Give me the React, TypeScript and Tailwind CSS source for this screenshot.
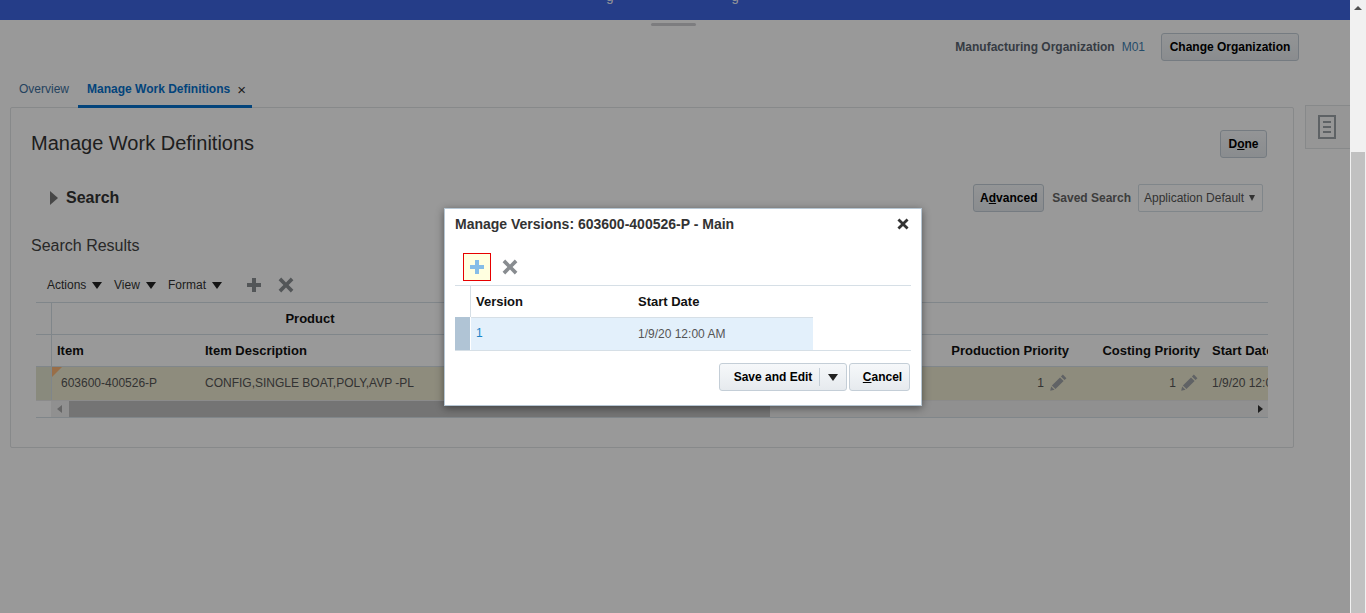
import React from "react";

const FONT = "font-['Liberation_Sans',Arial,sans-serif]";
const BTN =
  "h-7 flex items-center justify-center rounded-[3px] border border-[#c4ced7] bg-gradient-to-b from-[#f6f8fa] to-[#e6eaee] text-xs font-bold text-[#000]";

function Plus({ className }: { className: string }) {
  return (
    <svg viewBox="0 0 16 16" className={className} fill="currentColor">
      <path d="M6 1h4v5h5v4h-5v5H6v-5H1V6h5z" />
    </svg>
  );
}

function Cross({ className }: { className: string }) {
  return (
    <svg viewBox="0 0 16 16" className={className} fill="currentColor">
      <path d="M3.2.6 8 5.4 12.8.6l2.6 2.6L10.6 8l4.8 4.8-2.6 2.6L8 10.6l-4.8 4.8-2.6-2.6L5.4 8 .6 3.2z" />
    </svg>
  );
}

function Pencil() {
  return (
    <svg viewBox="0 0 18 18" className="w-[17px] h-[17px] text-[#a0a4a8]" fill="currentColor">
      <path d="M13.6.6 17.4 4.4 15.4 6.4 11.6 2.6zM10.6 3.6l3.8 3.8-8.6 8.6-3.8-3.8zM1.2 13.2l3.6 3.6-4.6 1z" />
    </svg>
  );
}

function Caret({ className = "ml-[5px]" }: { className?: string }) {
  return <span className={`${className} w-0 h-0 border-x-[5px] border-x-transparent border-t-[7px] border-t-[#222]`} />;
}

function ToolbarMenu({ label, width }: { label: string; width: string }) {
  return (
    <div className={`flex items-center ${width}`}>
      <span className="text-xs text-[#333]">{label}</span>
      <Caret className="ml-[6px]" />
    </div>
  );
}

function ResultsTable() {
  return (
    <div className="mt-1 mx-[25px] border-t border-[#d6dfe6] text-xs overflow-hidden">
      <div className="flex h-8 border-b border-[#d6dfe6]">
        <div className="w-[15px] shrink-0 border-r border-[#d6dfe6] box-content" />
        <div className="w-[516px] flex items-center justify-center font-bold text-[13px] text-[#111]">Product</div>
      </div>
      <div className="flex h-8 border-b border-[#d6dfe6] font-bold text-[13px] text-[#111] whitespace-nowrap">
        <div className="w-[15px] shrink-0 border-r border-[#d6dfe6] box-content" />
        <div className="w-[147px] shrink-0 pl-[5px] flex items-center">Item</div>
        <div className="w-[731px] shrink-0 pl-[6px] flex items-center">Item Description</div>
        <div className="w-[145px] shrink-0 pr-[6px] flex items-center justify-end">Production Priority</div>
        <div className="w-[131px] shrink-0 pr-[6px] flex items-center justify-end">Costing Priority</div>
        <div className="flex-1 pl-[6px] flex items-center overflow-hidden">Start Date</div>
      </div>
      <div className="flex h-[33px] pb-[2px] bg-[#ede9d0] text-[#555] whitespace-nowrap">
        <div className="w-[15px] -mb-[2px] shrink-0 border-r border-[#d6dfe6] box-content bg-[#e5e6d0]" />
        <div className="relative w-[147px] shrink-0 pl-[9px] flex items-center">
          <span className="absolute left-0 top-0 w-0 h-0 border-t-[10px] border-t-[#ffb878] border-r-[10px] border-r-transparent" />
          603600-400526-P
        </div>
        <div className="w-[731px] shrink-0 pl-[6px] flex items-center">CONFIG,SINGLE BOAT,POLY,AVP -PL</div>
        <div className="w-[145px] shrink-0 pr-[8px] flex items-center justify-end gap-[6px]">
          1 <Pencil />
        </div>
        <div className="w-[131px] shrink-0 pr-[8px] flex items-center justify-end gap-[5px]">
          1 <Pencil />
        </div>
        <div className="flex-1 pl-[6px] flex items-center overflow-hidden">1/9/20 12:00 AM</div>
      </div>
      <div className="flex h-[18px] border-b border-[#d6dfe6] border-t border-t-[#e8e8e8] bg-[#f0f0f0]">
        <div className="w-[15px] shrink-0 bg-white" />
        <div className="flex-1 flex items-center relative">
          <span className="ml-[6px] w-0 h-0 border-y-[4px] border-y-transparent border-r-[5px] border-r-[#aaa]" />
          <div className="ml-[7px] w-[701px] h-full bg-[#c1c1c1]" />
          <span className="absolute right-[5px] w-0 h-0 border-y-[4px] border-y-transparent border-l-[5px] border-l-[#333]" />
        </div>
      </div>
    </div>
  );
}

function VersionsDialog() {
  return (
    <div className="absolute z-30 left-[444px] top-[208px] w-[478px] h-[198px] bg-white border border-[#b6c6d3] shadow-[0_2px_8px_rgba(0,0,0,0.45)] px-[10px]">
      <div className="flex items-center justify-between h-[30px] pr-[2px]">
        <span className="text-sm font-bold text-[#333]">Manage Versions: 603600-400526-P - Main</span>
        <Cross className="w-3 h-3 text-[#333]" />
      </div>
      <div className="flex items-center h-[28px] mt-[14px] pl-2 gap-[11px]">
        <div className="w-7 h-7 border border-[#e60000] bg-[#ffffe0] flex items-center justify-center">
          <Plus className="w-4 h-4 text-[#85bde8]" />
        </div>
        <Cross className="w-4 h-4 text-[#888c90]" />
      </div>
      <div className="mt-1 border-t border-[#d6dfe6] border-b">
        <div className="flex h-[31px]">
          <div className="w-[15px] border-r border-[#d6dfe6] box-content" />
          <div className="w-[167px] pl-[5px] flex items-center text-[13px] font-bold text-[#111]">Version</div>
          <div className="flex items-center text-[13px] font-bold text-[#111]">Start Date</div>
        </div>
        <div className="flex h-[33px]">
          <div className="w-[15px] bg-[#b0c4d5] border-r border-white box-content" />
          <div className="w-[342px] flex bg-[#e3f0fb] border-t border-[#d6dfe6] text-xs">
            <div className="w-[167px] pl-[5px] pt-[7px] text-[#1a85c8]">1</div>
            <div className="pt-[8px] text-[#555]">1/9/20 12:00 AM</div>
          </div>
        </div>
      </div>
      <div className="flex justify-end mt-3 gap-[2px] pr-[1px]">
        <div className={`${BTN} w-[128px]`}>
          <span className="flex-1 text-center pl-[7px]">Save and Edit</span>
          <span className="w-[27px] h-[18px] border-l border-[#c4ced7] flex items-center justify-center">
            <Caret className="" />
          </span>
        </div>
        <div className={`${BTN} w-[61px] pl-[6px]`}>
          <span>
            <span className="underline">C</span>ancel
          </span>
        </div>
      </div>
    </div>
  );
}

export default function App() {
  return (
    <div className={`${FONT} flex h-screen overflow-hidden bg-white`}>
      <div className="relative w-[1350px] shrink-0 h-full flex flex-col">
        {/* Banner, its title is cut off by the scroll position */}
        <div className="h-5 shrink-0 bg-[#3f67e3] overflow-hidden flex justify-center gap-[118px] pr-[5px] text-white text-[13px] leading-none">
          <span className="-mt-[10px]">g</span>
          <span className="-mt-[10px]">g</span>
        </div>
        <div className="mt-[3px] ml-[651px] h-[3px] w-[45px] rounded-full bg-[#d0d0d4]" />

        <div className="mt-[7px] h-7 flex items-center justify-end pr-[51px] text-xs">
          <span className="font-bold text-[#5a6470]">Manufacturing Organization</span>
          <span className="ml-[7px] text-[#3f7fb0]">M01</span>
          <div className={`${BTN} ml-4 w-[138px]`}>Change Organization</div>
        </div>

        <div className="flex items-start">
          <div className="w-[1294px] shrink-0">
            <div className="flex h-[47px] items-end pl-[10px] relative -mb-px text-xs">
              <div className="h-9 px-[9px] pb-[2px] flex items-center text-[#3d6f9e]">Overview</div>
              <div className="h-9 flex items-center pl-[9px] pr-[6px] border-b-[3px] border-[#0572ce] font-bold text-[#0572ce]">
                Manage Work Definitions
                <span className="ml-[7px] mt-[2px] font-normal text-[15px] leading-none text-[#333]">×</span>
              </div>
            </div>

            <div className="ml-[10px] h-[341px] border border-[#e2e4e6] rounded-[2px]">
              <div className="mt-[22px] h-7 flex items-center justify-between pl-5 pr-[26px]">
                <h1 className="pb-[2px] text-xl text-[#333]">Manage Work Definitions</h1>
                <div className={`${BTN} w-[47px]`}>
                  <span>
                    D<span className="underline">o</span>ne
                  </span>
                </div>
              </div>

              <div className="mt-[26px] h-7 flex items-center pl-[39px] pr-[30px]">
                <span className="w-0 h-0 border-y-[7px] border-y-transparent border-l-[8px] border-l-[#777]" />
                <span className="ml-2 text-base font-bold text-[#333]">Search</span>
                <div className={`${BTN} ml-auto w-[71px]`}>
                  <span>
                    A<span className="underline">d</span>vanced
                  </span>
                </div>
                <span className="ml-[8px] text-xs font-bold text-[#666]">Saved Search</span>
                <div className="ml-[7px] w-[125px] h-7 border border-[#d6dfe6] rounded-[2px] flex items-center pl-[5px] text-xs text-[#555]">
                  Application Default
                  <span className="ml-[5px] w-0 h-0 border-x-[3.5px] border-x-transparent border-t-[6px] border-t-[#555]" />
                </div>
              </div>

              <h2 className="mt-[24px] ml-5 h-5 text-base leading-5 text-[#444]">Search Results</h2>

              <div className="mt-[16px] h-[26px] ml-9 flex items-center">
                <ToolbarMenu label="Actions" width="w-[67px]" />
                <ToolbarMenu label="View" width="w-[54px]" />
                <ToolbarMenu label="Format" width="w-[78px]" />
                <Plus className="w-4 h-4 text-[#8b8f93]" />
                <Cross className="ml-[16px] w-4 h-4 text-[#8b8f93]" />
              </div>

              <ResultsTable />
            </div>
          </div>

          <div className="ml-[11px] mt-[44px] w-[45px] h-11 pr-[2px] border border-r-0 border-[#e2e4e6] bg-[#fbfbfb] flex items-center justify-center">
            <svg viewBox="0 0 18 24" className="w-[18px] h-6 text-[#9da3a8]" fill="none" stroke="currentColor" strokeWidth="2">
              <path d="M1 1h16v22H1zM5 7h8M5 12h8M5 17h8" />
            </svg>
          </div>
        </div>

        {/* Modal overlay */}
        <div className="absolute z-20 inset-0 bg-black/40" />
        <VersionsDialog />
      </div>

      <div className="w-4 shrink-0 h-full bg-[#f1f1f1] flex flex-col items-center">
        <span className="mt-[6px] w-0 h-0 border-x-[4px] border-x-transparent border-b-[4px] border-b-[#505050]" />
        <div className="mt-[142px] flex-1 w-[14px] bg-[#c1c1c1]" />
      </div>
    </div>
  );
}
